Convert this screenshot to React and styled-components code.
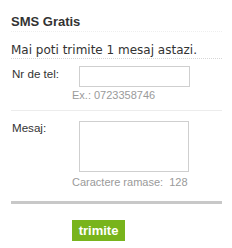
import React, { useState } from 'react';
import styled, { createGlobalStyle } from 'styled-components';

const GlobalStyle = createGlobalStyle`
  body {
    margin: 0;
    background: #fff;
    font-family: "Liberation Sans", Arial, sans-serif;
    color: #333;
  }
`;

const Box = styled.div`
  width: 232px;
  height: 248px;
  padding: 0 10px 0 11px;
  box-sizing: border-box;
`;

const Title = styled.h2`
  margin: 0;
  padding: 14px 0 2px;
  font-size: 13px;
  font-weight: bold;
  line-height: 15px;
  color: #333;
  border-bottom: 1px dotted #eeeeee;
`;

const Info = styled.p`
  margin: 0;
  padding: 11px 0 0;
  font-family: "DejaVu Sans", Verdana, sans-serif;
  font-size: 12px;
  line-height: 15px;
  border-bottom: 1px dotted #d6d6d6;
`;

const Row = styled.div`
  display: flex;
  align-items: flex-start;
  padding: ${p => p.pad};
  border-bottom: ${p => p.line};
`;

const Label = styled.label`
  width: 67px;
  padding-left: 1px;
  font-size: 11.6px;
  line-height: 14px;
  padding-top: ${p => p.top}px;
`;

const Field = styled.div`
  display: flex;
  flex-direction: column;
`;

const Input = styled.input`
  margin: 0;
  width: 111px;
  height: 21px;
  box-sizing: border-box;
  border: 1px solid #cfcfcf;
  padding: 0 3px;
  outline: none;
`;

const Area = styled.textarea`
  margin: 0;
  display: block;
  width: 110px;
  height: 51px;
  box-sizing: border-box;
  border: 1px solid #cfcfcf;
  resize: none;
  outline: none;
`;

const Hint = styled.span`
  margin-left: -7px;
  margin-top: ${p => p.top}px;
  font-size: 11px;
  line-height: 13px;
  color: #9a9a9a;
  white-space: nowrap;
`;

const Actions = styled.div`
  padding: 16px 0 0 61px;
`;

const Button = styled.button`
  display: block;
  width: 53px;
  height: 21px;
  border: 0;
  background: #78b41c;
  color: #fff;
  font-family: "Liberation Sans Narrow", "Liberation Sans", Arial, sans-serif;
  font-weight: bold;
  font-size: 13px;
  padding: 0;
  cursor: pointer;
`;

export default function App() {
  const [text, setText] = useState('');
  return (
    <Box>
      <GlobalStyle />
      <Title>SMS Gratis</Title>
      <Info>Mai poti trimite 1 mesaj astazi.</Info>
      <Row pad="7px 0 8px" line="1px solid #ececec">
        <Label top={1}>Nr de tel:</Label>
        <Field>
          <Input type="text" />
          <Hint top={2}>Ex.: 0723358746</Hint>
        </Field>
      </Row>
      <Row pad="10px 0 12px" line="3px solid #c8c8c8">
        <Label top={0}>Mesaj:</Label>
        <Field>
          <Area value={text} onChange={e => setText(e.target.value.slice(0, 128))} />
          <Hint top={4}>Caractere ramase:&nbsp; {128 - text.length}</Hint>
        </Field>
      </Row>
      <Actions>
        <Button>trimite</Button>
      </Actions>
    </Box>
  );
}
